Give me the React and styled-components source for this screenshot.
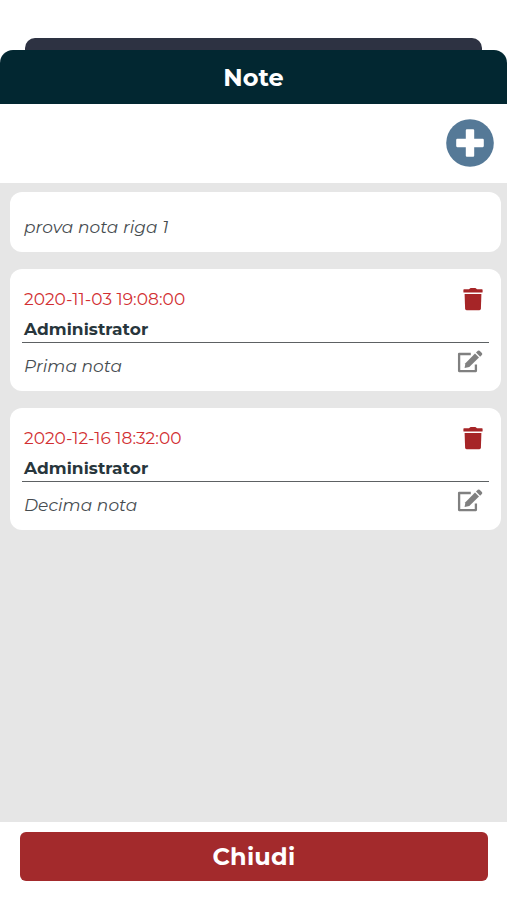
import React from 'react';
import styled, { createGlobalStyle } from 'styled-components';

const GlobalStyle = createGlobalStyle`
  * { box-sizing: border-box; }
  body { margin: 0; background: #fff; font-family: Montserrat, Inter, sans-serif; }
`;

const Screen = styled.div`
  display: flex;
  flex-direction: column;
  height: 900px;
  padding-top: 38px;
  overflow: hidden;
`;

const BackSheet = styled.div`
  height: 12px;
  margin: 0 25px;
  background: #2d3242;
  border-radius: 10px 10px 0 0;
`;

const Header = styled.header`
  display: flex;
  align-items: center;
  justify-content: center;
  height: 54px;
  border-radius: 13px 13px 0 0;
  background: #022731;
`;

const Title = styled.h1`
  margin: 0;
  color: #fff;
  font-size: 24px;
  line-height: 29px;
  font-weight: 700;
  letter-spacing: 0.1px;
`;

const Toolbar = styled.div`
  display: flex;
  justify-content: flex-end;
  height: 79.4px;
  padding: 15.2px 12.8px 0 0;
`;

const AddButton = styled.button`
  width: 48px;
  height: 48px;
  padding: 0;
  border: 0;
  background: none;
  svg { display: block; }
`;

const NoteList = styled.main`
  flex: 1;
  display: flex;
  flex-direction: column;
  gap: 17px;
  padding: 8.6px 6.5px 0 9.5px;
  background: #e6e6e6;
`;

const Card = styled.article`
  height: ${(p) => p.$height}px;
  padding: ${(p) => p.$top}px 12px 0;
  border-radius: 12px;
  background: #fff;
`;

const Meta = styled.div`
  display: flex;
  justify-content: space-between;
  height: 59px;
  padding: 0 6px 0 2.5px;
  border-bottom: 1px solid #5d6163;
`;

const Line = styled.div`
  height: 30px;
  line-height: 30px;
  white-space: nowrap;
  font-size: 17px;
`;

const DateLine = styled(Line)`
  color: #d22f32;
  letter-spacing: 0.04px;
`;

const Author = styled(Line)`
  color: #28363c;
  font-weight: 700;
  letter-spacing: 0.05px;
`;

const Body = styled.div`
  display: flex;
  justify-content: space-between;
  padding: 8px 6px 0 2.5px;
`;

const NoteText = styled(Line)`
  color: #464c50;
  font-style: italic;
  letter-spacing: 0.07px;
`;

const IconButton = styled.button`
  align-self: flex-start;
  margin: ${(p) => p.$top}px 0 0;
  padding: 0;
  border: 0;
  background: none;
  color: ${(p) => p.$color};
  svg { display: block; }
`;

const Footer = styled.footer`
  height: 78px;
  padding: 9.6px 19.5px 0 20.4px;
`;

const CloseButton = styled.button`
  width: 100%;
  height: 49px;
  padding: 0;
  border: 0;
  border-radius: 6px;
  background: #a32a2c;
  color: #fff;
  font: 700 24px Montserrat, Inter, sans-serif;
  letter-spacing: 0.25px;
`;

const notes = [
  { date: '2020-11-03 19:08:00', text: 'Prima nota' },
  { date: '2020-12-16 18:32:00', text: 'Decima nota' },
];

function TrashIcon() {
  return (
    <svg width="20" height="23" viewBox="0 0 20 23" fill="currentColor">
      <path d="M1 1.3H6L6.9.4Q7.2 0 7.7 0H12.3Q12.8 0 13.1.4L14 1.3H19Q19.6 1.3 19.6 2V4Q19.6 4.6 19 4.6H1Q.4 4.6 .4 4V2Q.4 1.3 1 1.3Z" />
      <path d="M1.6 6H18.4L17.9 20.8Q17.8 22.2 16.4 22.2H3.6Q2.2 22.2 2.1 20.8Z" />
    </svg>
  );
}

function EditIcon() {
  return (
    <svg width="26" height="23" viewBox="0 0 26 23" fill="currentColor">
      <path
        d="M13.8 4H2.1V21.1H18.9V14.6"
        fill="none"
        stroke="currentColor"
        strokeWidth="2.3"
        strokeLinejoin="round"
      />
      <path d="M18 3.6L22 7.6L12.3 17.1L7.6 18L8.4 13.2Z" />
      <path d="M19 2.6L20.8.8Q21.7 0 22.6.8L24.9 3.1Q25.7 4 24.9 4.9L23.1 6.7Z" />
    </svg>
  );
}

function PlusIcon() {
  return (
    <svg width="48" height="48" viewBox="0 0 48 48">
      <circle cx="24" cy="24" r="23.8" fill="#557997" />
      <path
        d="M20.9 10.2H27.1Q28.2 10.2 28.2 11.3V19.8H36.7Q37.8 19.8 37.8 20.9V27.1Q37.8 28.2 36.7 28.2H28.2V36.7Q28.2 37.8 27.1 37.8H20.9Q19.8 37.8 19.8 36.7V28.2H11.3Q10.2 28.2 10.2 27.1V20.9Q10.2 19.8 11.3 19.8H19.8V11.3Q19.8 10.2 20.9 10.2Z"
        fill="#fff"
      />
    </svg>
  );
}

function Note({ note }) {
  return (
    <Card $height={122} $top={15}>
      <Meta>
        <div>
          <DateLine>{note.date}</DateLine>
          <Author>Administrator</Author>
        </div>
        <IconButton $top={3.7} $color="#a62527" aria-label="Elimina">
          <TrashIcon />
        </IconButton>
      </Meta>
      <Body>
        <NoteText>{note.text}</NoteText>
        <IconButton $top={-1} $color="#808080" aria-label="Modifica">
          <EditIcon />
        </IconButton>
      </Body>
    </Card>
  );
}

export default function App() {
  return (
    <>
      <GlobalStyle />
      <Screen>
        <BackSheet />
        <Header><Title>Note</Title></Header>
        <Toolbar>
          <AddButton aria-label="Aggiungi"><PlusIcon /></AddButton>
        </Toolbar>
        <NoteList>
          <Card $height={60} $top={12}>
            <Body><NoteText>prova nota riga 1</NoteText></Body>
          </Card>
          {notes.map((note) => <Note key={note.date} note={note} />)}
        </NoteList>
        <Footer><CloseButton>Chiudi</CloseButton></Footer>
      </Screen>
    </>
  );
}
